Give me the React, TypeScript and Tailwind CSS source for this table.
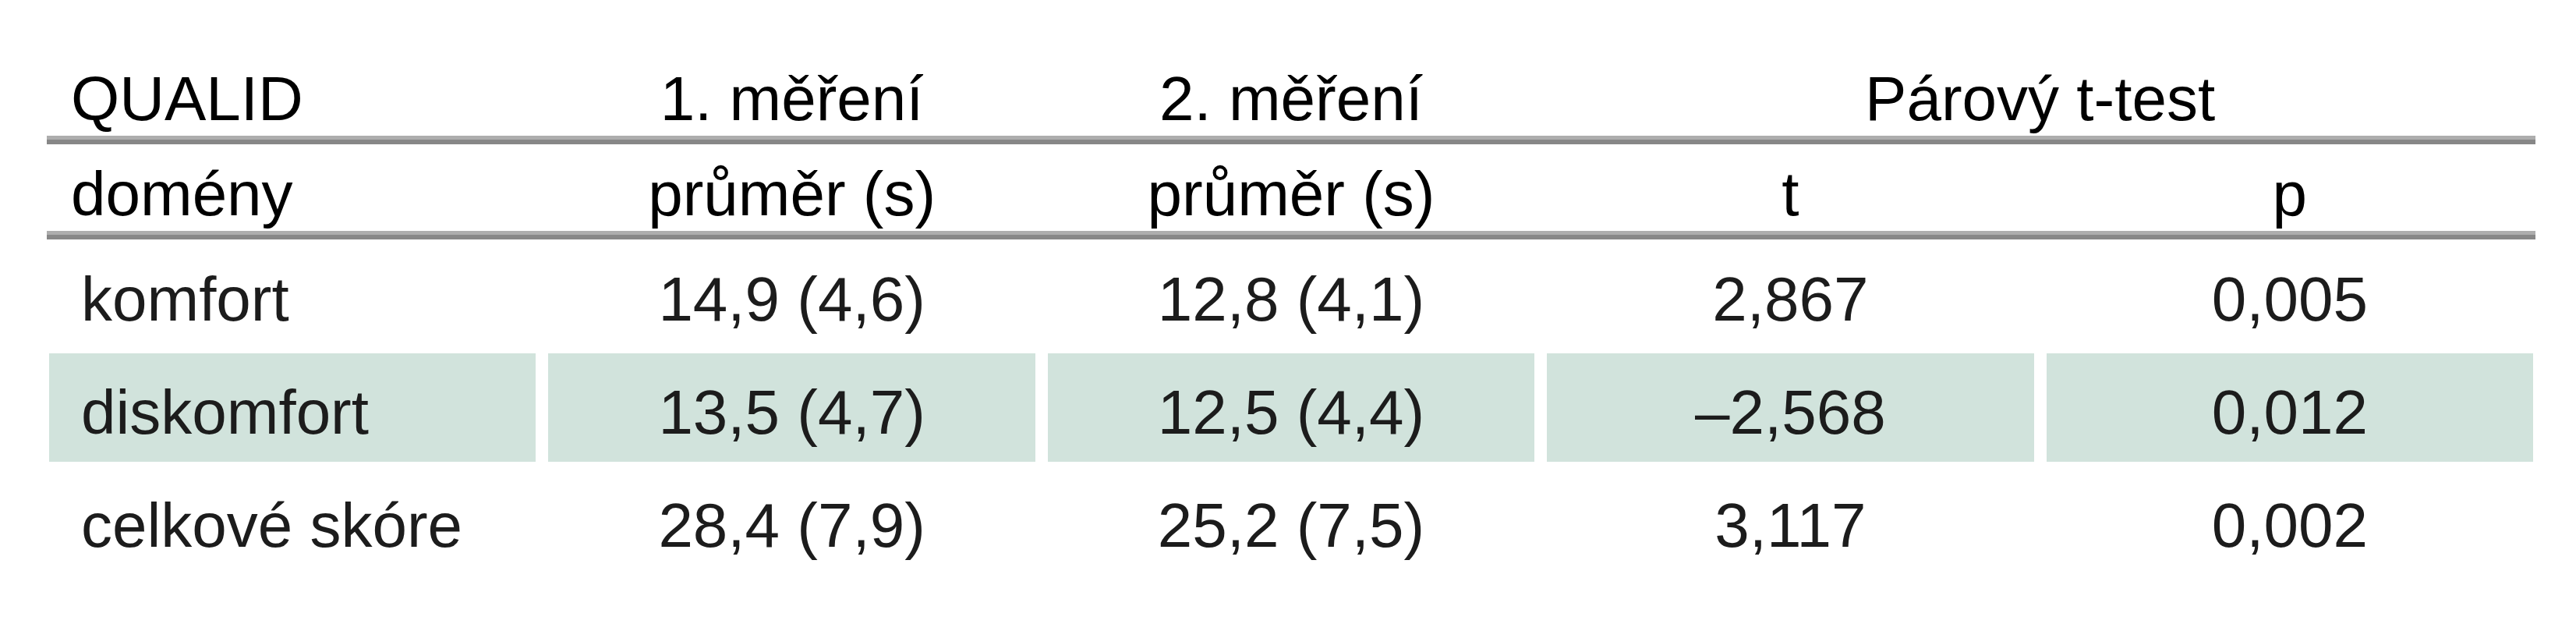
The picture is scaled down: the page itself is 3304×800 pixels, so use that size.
const rows = [
  { label: "komfort", m1: "14,9 (4,6)", m2: "12,8 (4,1)", t: "2,867", p: "0,005", shaded: false },
  { label: "diskomfort", m1: "13,5 (4,7)", m2: "12,5 (4,4)", t: "–2,568", p: "0,012", shaded: true },
  { label: "celkové skóre", m1: "28,4 (7,9)", m2: "25,2 (7,5)", t: "3,117", p: "0,002", shaded: false },
];

const Rule = () => (
  <div className="h-[11px] bg-[#878787] border-t-[5px] border-[#adadad]" />
);

const App = () => {
  return (
    <div
      className="w-[3304px] h-[800px] bg-white pt-[63px] pl-[60px] text-[80px] leading-none"
      style={{ fontFamily: '"Liberation Sans", Arial, sans-serif' }}
    >
      <div className="w-[3192px]">
        {/* Header row 1 */}
        <div className="grid grid-cols-5 gap-x-4 px-[3px] h-[111px] pt-[24px] text-black">
          <div className="pl-[28px]">QUALID</div>
          <div className="text-center">1. měření</div>
          <div className="text-center">2. měření</div>
          <div className="col-span-2 text-center">Párový t-test</div>
        </div>
        <Rule />

        {/* Header row 2 */}
        <div className="grid grid-cols-5 gap-x-4 px-[3px] h-[111px] pt-[24px] text-black">
          <div className="pl-[28px]">domény</div>
          <div className="text-center">průměr (s)</div>
          <div className="text-center">průměr (s)</div>
          <div className="text-center">t</div>
          <div className="text-center">p</div>
        </div>
        <Rule />

        {/* Body */}
        <div className="flex flex-col gap-[6px] pt-[1px] text-[#1c1c1c]">
          {rows.map((r) => {
            const cell = r.shaded ? "h-[139px] pt-[36px] bg-[#d1e3dc]" : "h-[139px] pt-[36px]";
            return (
              <div key={r.label} className="grid grid-cols-5 gap-x-4 px-[3px]">
                <div className={`${cell} pl-[41px]`}>{r.label}</div>
                <div className={`${cell} text-center`}>{r.m1}</div>
                <div className={`${cell} text-center`}>{r.m2}</div>
                <div className={`${cell} text-center`}>{r.t}</div>
                <div className={`${cell} text-center`}>{r.p}</div>
              </div>
            );
          })}
        </div>
      </div>
    </div>
  );
};

export default App;
